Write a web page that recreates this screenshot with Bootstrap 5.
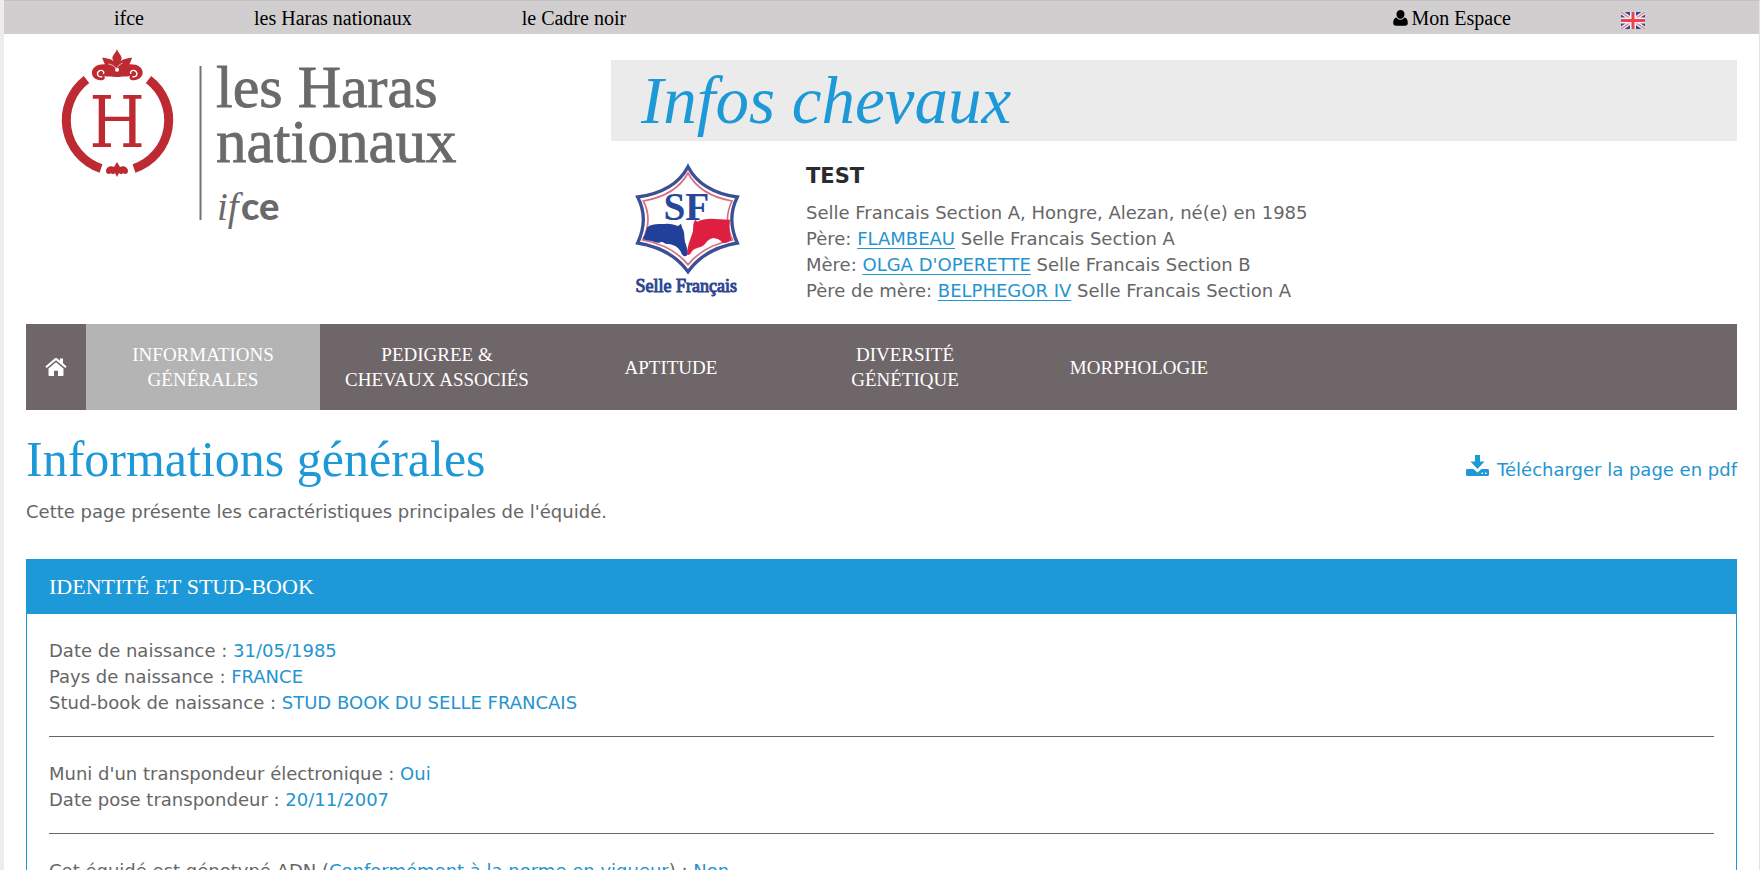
<!DOCTYPE html>
<html lang="fr">
<head>
<meta charset="utf-8">
<meta name="viewport" content="width=device-width, initial-scale=1">
<title>Infos chevaux - Informations générales</title>
<link href="https://cdn.jsdelivr.net/npm/bootstrap@5.3.0/dist/css/bootstrap.min.css" rel="stylesheet">
<style>
:root { --azure: #1e99d8; --slate: #6e6668; --serif: "Liberation Serif", serif; }
body { font-family: "DejaVu Sans", sans-serif; font-size: 18px; line-height: 26px; color: #666; background: #fff;
  border-left: 4px solid #ededed; border-right: 1px solid #e4e4e4; overflow-x: hidden; }
a { color: #2594cf; }
.serif { font-family: var(--serif); }
.topbar { background: #d0cece; border-top: 1px solid #c2c0c1; min-height: 34px; font-size: 20px; line-height: 32px; padding: 1px 114px 0 110px; }
.topbar a { color: #000; text-decoration: none; white-space: nowrap; }
.topbar-links { gap: 110px; }
.page-pad { padding: 0 22px; }
.site-head { --bs-gutter-x: 44px; }
.banner { background: #ebebeb; margin-top: 26px; padding: 0 30px; min-height: 81px; }
.banner-title { color: var(--azure); font-size: 67px; line-height: 81px; font-style: italic; }
.horse { padding: 14px 0 19px 14px; gap: 51px; }
.horse-name { font-size: 21px; line-height: 26px; font-weight: 700; color: #2b2b2b; margin: 8px 0 11px; }
.horse a { text-underline-offset: 3px; text-decoration-thickness: 1px; }
.mainnav { background: var(--slate); min-height: 86px; font-size: 19px; line-height: 25px; }
.mainnav a { color: #fff; width: 234px; text-decoration: none; text-align: center; text-transform: uppercase; }
.mainnav a.home { width: 60px; }
.mainnav a.active { background: #b4b4b4; }
.page-title { color: var(--azure); font-size: 50px; line-height: 60px; }
.title-row { padding-top: 19px; }
.intro { margin: 10px 0 34px; }
.panel { border: 1px solid var(--azure); border-radius: 0; --bs-card-bg: #fff; color: inherit; }
.panel-title { background: var(--azure); color: #fff; font-size: 22px; line-height: 54px; padding: 0 22px; }
.panel-body { padding: 24px 22px; }
.panel-body hr { margin: 20px 0 24px; border-top: 1px solid #666; opacity: 1; }
.val { color: #2594cf; }
</style>
</head>
<body>
<div class="topbar serif d-flex justify-content-between">
  <div class="topbar-links d-flex">
    <a href="#">ifce</a><a href="#">les Haras nationaux</a><a href="#">le Cadre noir</a>
  </div>
  <div class="topbar-links d-flex align-items-center">
    <a href="#" class="d-flex align-items-center gap-1"><svg width="15" height="16" viewBox="0 0 15 16" aria-hidden="true"><path d="M7.500 0a4 4 0 0 1 4 4.200c0 2.400-1.800 4.600-4 4.600s-4-2.200-4-4.600A4 4 0 0 1 7.500 0zM3.600 7.400c1 1.500 2.400 2.300 3.900 2.300s2.900-.8 3.900-2.300C14 7.800 14.700 10 14.800 13c0 1.700-1 2.800-2.700 2.800H2.900C1.200 15.800.2 14.700.2 13 .3 10 1 7.800 3.600 7.400z"/></svg>Mon Espace</a>
    <a href="#" aria-label="English" class="d-flex pt-1"><svg width="24" height="17" viewBox="0 0 24 17"><path fill="#35488f" d="M0 0h24v17H0z"/><path stroke="#eee5ef" stroke-width="4" d="M0 0l24 17M24 0L0 17"/><path stroke="#df7f8b" stroke-width="1.300" d="M0 0l24 17M24 0L0 17"/><path stroke="#fbeef2" stroke-width="6" d="M12 0v17M0 8.500h24"/><path stroke="#e9434f" stroke-width="3" d="M12 0v17M0 8.500h24"/></svg></a>
  </div>
</div>

<div class="page-pad">
  <header class="row site-head">
    <div class="col-4">
      <a href="#" aria-label="les Haras nationaux"><svg class="mw-100" width="450" height="200" viewBox="26 34 450 200">
        <g fill="none" stroke="#bd2a31" stroke-width="9"><path d="M86.500 79.500A51 51 0 0 0 101 168.500"/><path d="M148.500 79.500A51 51 0 0 1 134 168.500"/></g>
        <text x="117" y="147" text-anchor="middle" font-family="'DejaVu Serif Condensed','DejaVu Serif',serif" font-size="71" fill="#bd2a31">H</text>
        <g fill="#bd2a31">
          <g transform="translate(85 44) scale(.3333)">
            <path d="M96 14C98 26 110 32 110 44L107 51C117 44 128 42 142 41 138 47 138 53 133 61 158 60 172 70 173 85 173 99 162 108 146 109 135 108 131 103 135 95 126 99 117 96 108 98 101 99 91 99 84 98 75 96 66 99 58 95 62 103 58 108 47 109 31 108 20 99 21 85 22 70 36 60 60 61 55 53 55 47 51 41 65 42 76 44 86 51L82 44C82 32 94 26 96 14z"/>
            <path d="M52 98C38 101 32 87 44 80 54 77 60 86 54 89M142 98C156 101 161 87 149 80 139 77 133 86 139 89" fill="none" stroke="#fff" stroke-width="4"/>
            <path d="M70 60C80 61 89 67 93 73M113 57C104 61 99 66 96 71" fill="none" stroke="#fff" stroke-width="2"/>
            <circle cx="96" cy="77" r="6" fill="#fff"/>
          </g>
          <path d="M117 162l3 5c3-2 8 0 8 4 0 3-3 4-5 2-1 2-3 1-4 0l-2 4-2-4c-1 1-3 2-4 0-2 2-5 1-5-2 0-4 5-6 8-4z"/>
        </g>
        <path d="M200.500 66v154" stroke="#747272" stroke-width="2"/>
        <g fill="#6b696a" stroke="#6b696a" stroke-width=".8" font-family="'Liberation Serif',serif">
          <text x="216" y="107" font-size="60">les Haras</text><text x="216" y="162" font-size="61">nationaux</text>
          <text x="217" y="220" font-size="39" font-style="italic" stroke="none">if</text>
        </g>
        <text x="241" y="220" font-family="Lato,sans-serif" font-weight="900" font-size="38" fill="#6b696a">ce</text>
      </svg></a>
    </div>
    <div class="col-8">
      <div class="banner"><div class="banner-title serif">Infos chevaux</div></div>
      <div class="horse d-flex">
        <svg class="flex-shrink-0" width="130" height="150" viewBox="0 0 390 450" role="img" aria-label="Selle Français">
          <path d="M189 35Q150 110 38 126Q72 192 38 264Q138 280 189 350Q240 280 337 264Q304 192 337 126Q228 110 189 35z" fill="#fff" stroke="#3b4f94" stroke-width="10"/>
          <path d="M189 54Q153 121 55 138Q84 194 53 255Q144 272 189 329Q235 272 323 255Q293 194 321 138Q225 121 189 54z" fill="#fff" stroke="#d96a80" stroke-width="5"/>
          <path fill="#20409a" d="M65 220C72 208 92 206 120 207c14-2 29 3 39 6l9-7 4 14c8 12 5 26 8 40 4 12 9 26 8 38-3 9-14 7-18-2-7-18-21-27-41-29-9 1-13-6-19-7-10 8-27-3-36-3-15-2-18-3-20-8 6-9 9-18 11-29z"/>
          <path fill="#df1f40" d="M205 208l5-14 8 6c17-10 43-10 65-7 12 0 22 2 32 1-3 24-1 44 4 60-10 8-16 10-26 10-8-11-18-14-28-15-11 1-18 9-25 18-12 14-31 8-41 25-5 9-8 10-13 6 1-30 13-50 18-70z"/>
          <text x="184" y="194" text-anchor="middle" font-family="'Liberation Serif',serif" font-weight="700" font-size="118" fill="#27479b">SF</text>
          <text x="184" y="410" text-anchor="middle" font-family="'Liberation Serif',serif" font-size="54" fill="#2e4590" stroke="#2e4590" stroke-width="3">Selle Français</text>
        </svg>
        <div>
          <h2 class="horse-name">TEST</h2>
          <div>Selle Francais Section A, Hongre, Alezan, né(e) en 1985</div>
          <div>Père: <a href="#">FLAMBEAU</a> Selle Francais Section A</div>
          <div>Mère: <a href="#">OLGA D'OPERETTE</a> Selle Francais Section B</div>
          <div>Père de mère: <a href="#">BELPHEGOR IV</a> Selle Francais Section A</div>
        </div>
      </div>
    </div>
  </header>

  <nav class="mainnav serif d-flex">
    <a href="#" class="home d-flex align-items-center justify-content-center" aria-label="Accueil"><svg width="22" height="18" viewBox="0 0 22 18" fill="#fff"><path d="M11 4.300l7.500 6.200V17c0 .6-.4 1-1 1H13v-5.200H9V18H4.500c-.6 0-1-.4-1-1v-6.500z"/><path d="M11 0c.5 0 .9.100 1.300.5L15 2.800V.6h3v4.700l3.600 3.100-1.300 1.500L11 2.300 1.700 9.900.4 8.400 9.700.5C10.100.1 10.500 0 11 0z"/></svg></a>
    <a href="#" class="active d-flex align-items-center justify-content-center" aria-current="page">Informations<br>générales</a>
    <a href="#" class="d-flex align-items-center justify-content-center">Pedigree &amp;<br>chevaux associés</a>
    <a href="#" class="d-flex align-items-center justify-content-center">Aptitude</a>
    <a href="#" class="d-flex align-items-center justify-content-center">Diversité<br>génétique</a>
    <a href="#" class="d-flex align-items-center justify-content-center">Morphologie</a>
  </nav>

  <main>
    <div class="title-row d-flex justify-content-between align-items-baseline">
      <h1 class="page-title serif fw-normal mb-0">Informations générales</h1>
      <a href="#" class="text-decoration-none"><svg class="me-2 align-baseline" width="23" height="21" viewBox="0 0 23 21" fill="#1e99d8" aria-hidden="true"><path d="M9 0h5v6.500h4.500L11.500 14 4.500 6.500H9z"/><path fill-rule="evenodd" d="M1.500 14h6l4 3.500 4-3.500h6c.9 0 1.500.6 1.500 1.500v4c0 .9-.6 1.500-1.500 1.500h-20C.6 21 0 20.400 0 19.500v-4c0-.9.6-1.500 1.500-1.500zM15.500 17.500v1.500H17v-1.500zm3.500 0v1.500h1.500v-1.500z"/></svg>Télécharger la page en pdf</a>
    </div>
    <p class="intro">Cette page présente les caractéristiques principales de l'équidé.</p>

    <section class="card panel">
      <h2 class="panel-title serif fw-normal mb-0">IDENTITÉ ET STUD-BOOK</h2>
      <div class="panel-body">
        <div>Date de naissance : <span class="val">31/05/1985</span></div>
        <div>Pays de naissance : <span class="val">FRANCE</span></div>
        <div>Stud-book de naissance : <span class="val">STUD BOOK DU SELLE FRANCAIS</span></div>
        <hr>
        <div>Muni d'un transpondeur électronique : <span class="val">Oui</span></div>
        <div>Date pose transpondeur : <span class="val">20/11/2007</span></div>
        <hr>
        <div>Cet équidé est génotypé ADN (<a href="#">Conformément à la norme en vigueur</a>) : <span class="val">Non</span></div>
      </div>
    </section>
  </main>
</div>
<script src="https://cdn.jsdelivr.net/npm/bootstrap@5.3.0/dist/js/bootstrap.bundle.min.js"></script>
</body>
</html>
